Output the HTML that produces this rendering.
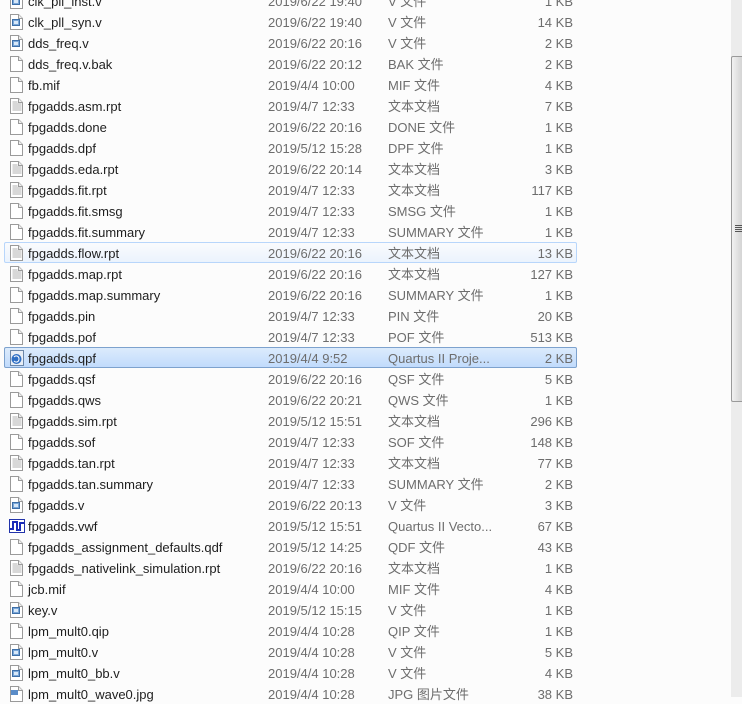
<!DOCTYPE html>
<html><head><meta charset="utf-8"><style>
html,body{margin:0;padding:0;}
body{width:742px;height:697px;overflow:hidden;background:#fcfcfc;position:relative;font-family:"Liberation Sans","Noto Sans CJK SC",sans-serif;font-size:13px;line-height:15px;}
.r{position:absolute;left:4px;width:573px;height:21px;box-sizing:border-box;}
.r.h{border:1px solid #b8d6fb;border-radius:2px;background:linear-gradient(#fafbfd,#ebf3fd);}
.r.s{border:1px solid #7da2ce;border-radius:2px;background:linear-gradient(#dcebfc,#c1dbfc);}
.r svg{position:absolute;left:5px;top:3px;}
.n{position:absolute;left:24px;top:4px;color:#1e1e1e;white-space:nowrap;}
.d{position:absolute;left:264px;top:4px;color:#6d6d6d;white-space:nowrap;}
.t{position:absolute;left:384px;top:4px;color:#6d6d6d;white-space:nowrap;}
.z{position:absolute;right:4px;top:4px;color:#6d6d6d;white-space:nowrap;}
.h .n,.h .d,.h .t,.h .z,.s .n,.s .d,.s .t,.s .z{top:3px;}
.h svg,.s svg{top:2px;left:4px;}
.h .n,.s .n{left:23px}.h .d,.s .d{left:263px}.h .t,.s .t{left:383px}.h .z,.s .z{right:3px}
.sb{position:absolute;left:731px;top:0;width:11px;height:697px;background:#ececec;}
.th{position:absolute;left:731px;top:56px;width:11px;height:346px;box-sizing:border-box;border:1px solid #9a9a9a;border-right:none;border-radius:2px 0 0 2px;background:linear-gradient(90deg,#f2f2f2,#e3e3e3 50%,#d4d4d4);}
.g{position:absolute;left:3px;width:8px;height:1px;background:#555;}
</style></head><body>
<svg width="0" height="0" style="position:absolute">
<defs>
<g id="pg"><path d="M1.5 0.5h8l4 4v11h-12z" fill="#fff" stroke="#9a9a9a"/><path d="M9.5 0.5v4h4" fill="#eee" stroke="#9a9a9a"/></g>
<g id="tx"><use href="#pg"/><path d="M3.5 4h5M3.5 6h9M3.5 8h9M3.5 10h9M3.5 12h9" stroke="#b0b0b0"/></g>
<g id="vv"><use href="#pg"/><rect x="3.5" y="5.5" width="7" height="6" fill="#7aa7d8" stroke="#3d6fa8"/><rect x="5" y="7" width="4" height="3" fill="#d8e8f8"/></g>
<g id="qp"><rect x="1.5" y="0.5" width="13" height="15" fill="#e8eef6" stroke="#6b86a8"/><circle cx="7.5" cy="9" r="5" fill="#2f6fc4"/><path d="M5 7c2-2 5-1 5 2s-3 4-5 2" stroke="#fff" fill="none"/></g>
<g id="wv"><rect x="0.5" y="1.5" width="15" height="13" fill="#fff" stroke="#2233aa"/><path d="M1 11h3V4h4v8h3V5h4" stroke="#1a2bb8" stroke-width="2" fill="none"/></g>
<g id="jp"><use href="#pg"/><rect x="2" y="4" width="7" height="5" fill="#5a8cc8"/></g>
</defs></svg>

<div class="r" style="top:-10px"><svg width="16" height="16"><use href="#vv"/></svg><span class="n">clk_pll_inst.v</span><span class="d">2019/6/22 19:40</span><span class="t">V 文件</span><span class="z">1 KB</span></div>
<div class="r" style="top:11px"><svg width="16" height="16"><use href="#vv"/></svg><span class="n">clk_pll_syn.v</span><span class="d">2019/6/22 19:40</span><span class="t">V 文件</span><span class="z">14 KB</span></div>
<div class="r" style="top:32px"><svg width="16" height="16"><use href="#vv"/></svg><span class="n">dds_freq.v</span><span class="d">2019/6/22 20:16</span><span class="t">V 文件</span><span class="z">2 KB</span></div>
<div class="r" style="top:53px"><svg width="16" height="16"><use href="#pg"/></svg><span class="n">dds_freq.v.bak</span><span class="d">2019/6/22 20:12</span><span class="t">BAK 文件</span><span class="z">2 KB</span></div>
<div class="r" style="top:74px"><svg width="16" height="16"><use href="#pg"/></svg><span class="n">fb.mif</span><span class="d">2019/4/4 10:00</span><span class="t">MIF 文件</span><span class="z">4 KB</span></div>
<div class="r" style="top:95px"><svg width="16" height="16"><use href="#tx"/></svg><span class="n">fpgadds.asm.rpt</span><span class="d">2019/4/7 12:33</span><span class="t">文本文档</span><span class="z">7 KB</span></div>
<div class="r" style="top:116px"><svg width="16" height="16"><use href="#pg"/></svg><span class="n">fpgadds.done</span><span class="d">2019/6/22 20:16</span><span class="t">DONE 文件</span><span class="z">1 KB</span></div>
<div class="r" style="top:137px"><svg width="16" height="16"><use href="#pg"/></svg><span class="n">fpgadds.dpf</span><span class="d">2019/5/12 15:28</span><span class="t">DPF 文件</span><span class="z">1 KB</span></div>
<div class="r" style="top:158px"><svg width="16" height="16"><use href="#tx"/></svg><span class="n">fpgadds.eda.rpt</span><span class="d">2019/6/22 20:14</span><span class="t">文本文档</span><span class="z">3 KB</span></div>
<div class="r" style="top:179px"><svg width="16" height="16"><use href="#tx"/></svg><span class="n">fpgadds.fit.rpt</span><span class="d">2019/4/7 12:33</span><span class="t">文本文档</span><span class="z">117 KB</span></div>
<div class="r" style="top:200px"><svg width="16" height="16"><use href="#pg"/></svg><span class="n">fpgadds.fit.smsg</span><span class="d">2019/4/7 12:33</span><span class="t">SMSG 文件</span><span class="z">1 KB</span></div>
<div class="r" style="top:221px"><svg width="16" height="16"><use href="#pg"/></svg><span class="n">fpgadds.fit.summary</span><span class="d">2019/4/7 12:33</span><span class="t">SUMMARY 文件</span><span class="z">1 KB</span></div>
<div class="r h" style="top:242px"><svg width="16" height="16"><use href="#tx"/></svg><span class="n">fpgadds.flow.rpt</span><span class="d">2019/6/22 20:16</span><span class="t">文本文档</span><span class="z">13 KB</span></div>
<div class="r" style="top:263px"><svg width="16" height="16"><use href="#tx"/></svg><span class="n">fpgadds.map.rpt</span><span class="d">2019/6/22 20:16</span><span class="t">文本文档</span><span class="z">127 KB</span></div>
<div class="r" style="top:284px"><svg width="16" height="16"><use href="#pg"/></svg><span class="n">fpgadds.map.summary</span><span class="d">2019/6/22 20:16</span><span class="t">SUMMARY 文件</span><span class="z">1 KB</span></div>
<div class="r" style="top:305px"><svg width="16" height="16"><use href="#pg"/></svg><span class="n">fpgadds.pin</span><span class="d">2019/4/7 12:33</span><span class="t">PIN 文件</span><span class="z">20 KB</span></div>
<div class="r" style="top:326px"><svg width="16" height="16"><use href="#pg"/></svg><span class="n">fpgadds.pof</span><span class="d">2019/4/7 12:33</span><span class="t">POF 文件</span><span class="z">513 KB</span></div>
<div class="r s" style="top:347px"><svg width="16" height="16"><use href="#qp"/></svg><span class="n">fpgadds.qpf</span><span class="d">2019/4/4 9:52</span><span class="t">Quartus II Proje...</span><span class="z">2 KB</span></div>
<div class="r" style="top:368px"><svg width="16" height="16"><use href="#pg"/></svg><span class="n">fpgadds.qsf</span><span class="d">2019/6/22 20:16</span><span class="t">QSF 文件</span><span class="z">5 KB</span></div>
<div class="r" style="top:389px"><svg width="16" height="16"><use href="#pg"/></svg><span class="n">fpgadds.qws</span><span class="d">2019/6/22 20:21</span><span class="t">QWS 文件</span><span class="z">1 KB</span></div>
<div class="r" style="top:410px"><svg width="16" height="16"><use href="#tx"/></svg><span class="n">fpgadds.sim.rpt</span><span class="d">2019/5/12 15:51</span><span class="t">文本文档</span><span class="z">296 KB</span></div>
<div class="r" style="top:431px"><svg width="16" height="16"><use href="#pg"/></svg><span class="n">fpgadds.sof</span><span class="d">2019/4/7 12:33</span><span class="t">SOF 文件</span><span class="z">148 KB</span></div>
<div class="r" style="top:452px"><svg width="16" height="16"><use href="#tx"/></svg><span class="n">fpgadds.tan.rpt</span><span class="d">2019/4/7 12:33</span><span class="t">文本文档</span><span class="z">77 KB</span></div>
<div class="r" style="top:473px"><svg width="16" height="16"><use href="#pg"/></svg><span class="n">fpgadds.tan.summary</span><span class="d">2019/4/7 12:33</span><span class="t">SUMMARY 文件</span><span class="z">2 KB</span></div>
<div class="r" style="top:494px"><svg width="16" height="16"><use href="#vv"/></svg><span class="n">fpgadds.v</span><span class="d">2019/6/22 20:13</span><span class="t">V 文件</span><span class="z">3 KB</span></div>
<div class="r" style="top:515px"><svg width="16" height="16"><use href="#wv"/></svg><span class="n">fpgadds.vwf</span><span class="d">2019/5/12 15:51</span><span class="t">Quartus II Vecto...</span><span class="z">67 KB</span></div>
<div class="r" style="top:536px"><svg width="16" height="16"><use href="#pg"/></svg><span class="n">fpgadds_assignment_defaults.qdf</span><span class="d">2019/5/12 14:25</span><span class="t">QDF 文件</span><span class="z">43 KB</span></div>
<div class="r" style="top:557px"><svg width="16" height="16"><use href="#tx"/></svg><span class="n">fpgadds_nativelink_simulation.rpt</span><span class="d">2019/6/22 20:16</span><span class="t">文本文档</span><span class="z">1 KB</span></div>
<div class="r" style="top:578px"><svg width="16" height="16"><use href="#pg"/></svg><span class="n">jcb.mif</span><span class="d">2019/4/4 10:00</span><span class="t">MIF 文件</span><span class="z">4 KB</span></div>
<div class="r" style="top:599px"><svg width="16" height="16"><use href="#vv"/></svg><span class="n">key.v</span><span class="d">2019/5/12 15:15</span><span class="t">V 文件</span><span class="z">1 KB</span></div>
<div class="r" style="top:620px"><svg width="16" height="16"><use href="#pg"/></svg><span class="n">lpm_mult0.qip</span><span class="d">2019/4/4 10:28</span><span class="t">QIP 文件</span><span class="z">1 KB</span></div>
<div class="r" style="top:641px"><svg width="16" height="16"><use href="#vv"/></svg><span class="n">lpm_mult0.v</span><span class="d">2019/4/4 10:28</span><span class="t">V 文件</span><span class="z">5 KB</span></div>
<div class="r" style="top:662px"><svg width="16" height="16"><use href="#vv"/></svg><span class="n">lpm_mult0_bb.v</span><span class="d">2019/4/4 10:28</span><span class="t">V 文件</span><span class="z">4 KB</span></div>
<div class="r" style="top:683px"><svg width="16" height="16"><use href="#jp"/></svg><span class="n">lpm_mult0_wave0.jpg</span><span class="d">2019/4/4 10:28</span><span class="t">JPG 图片文件</span><span class="z">38 KB</span></div>

<div class="sb"></div>
<div class="th"><div class="g" style="top:168px"></div><div class="g" style="top:170px"></div><div class="g" style="top:172px"></div><div class="g" style="top:174px"></div></div>
</body></html>
